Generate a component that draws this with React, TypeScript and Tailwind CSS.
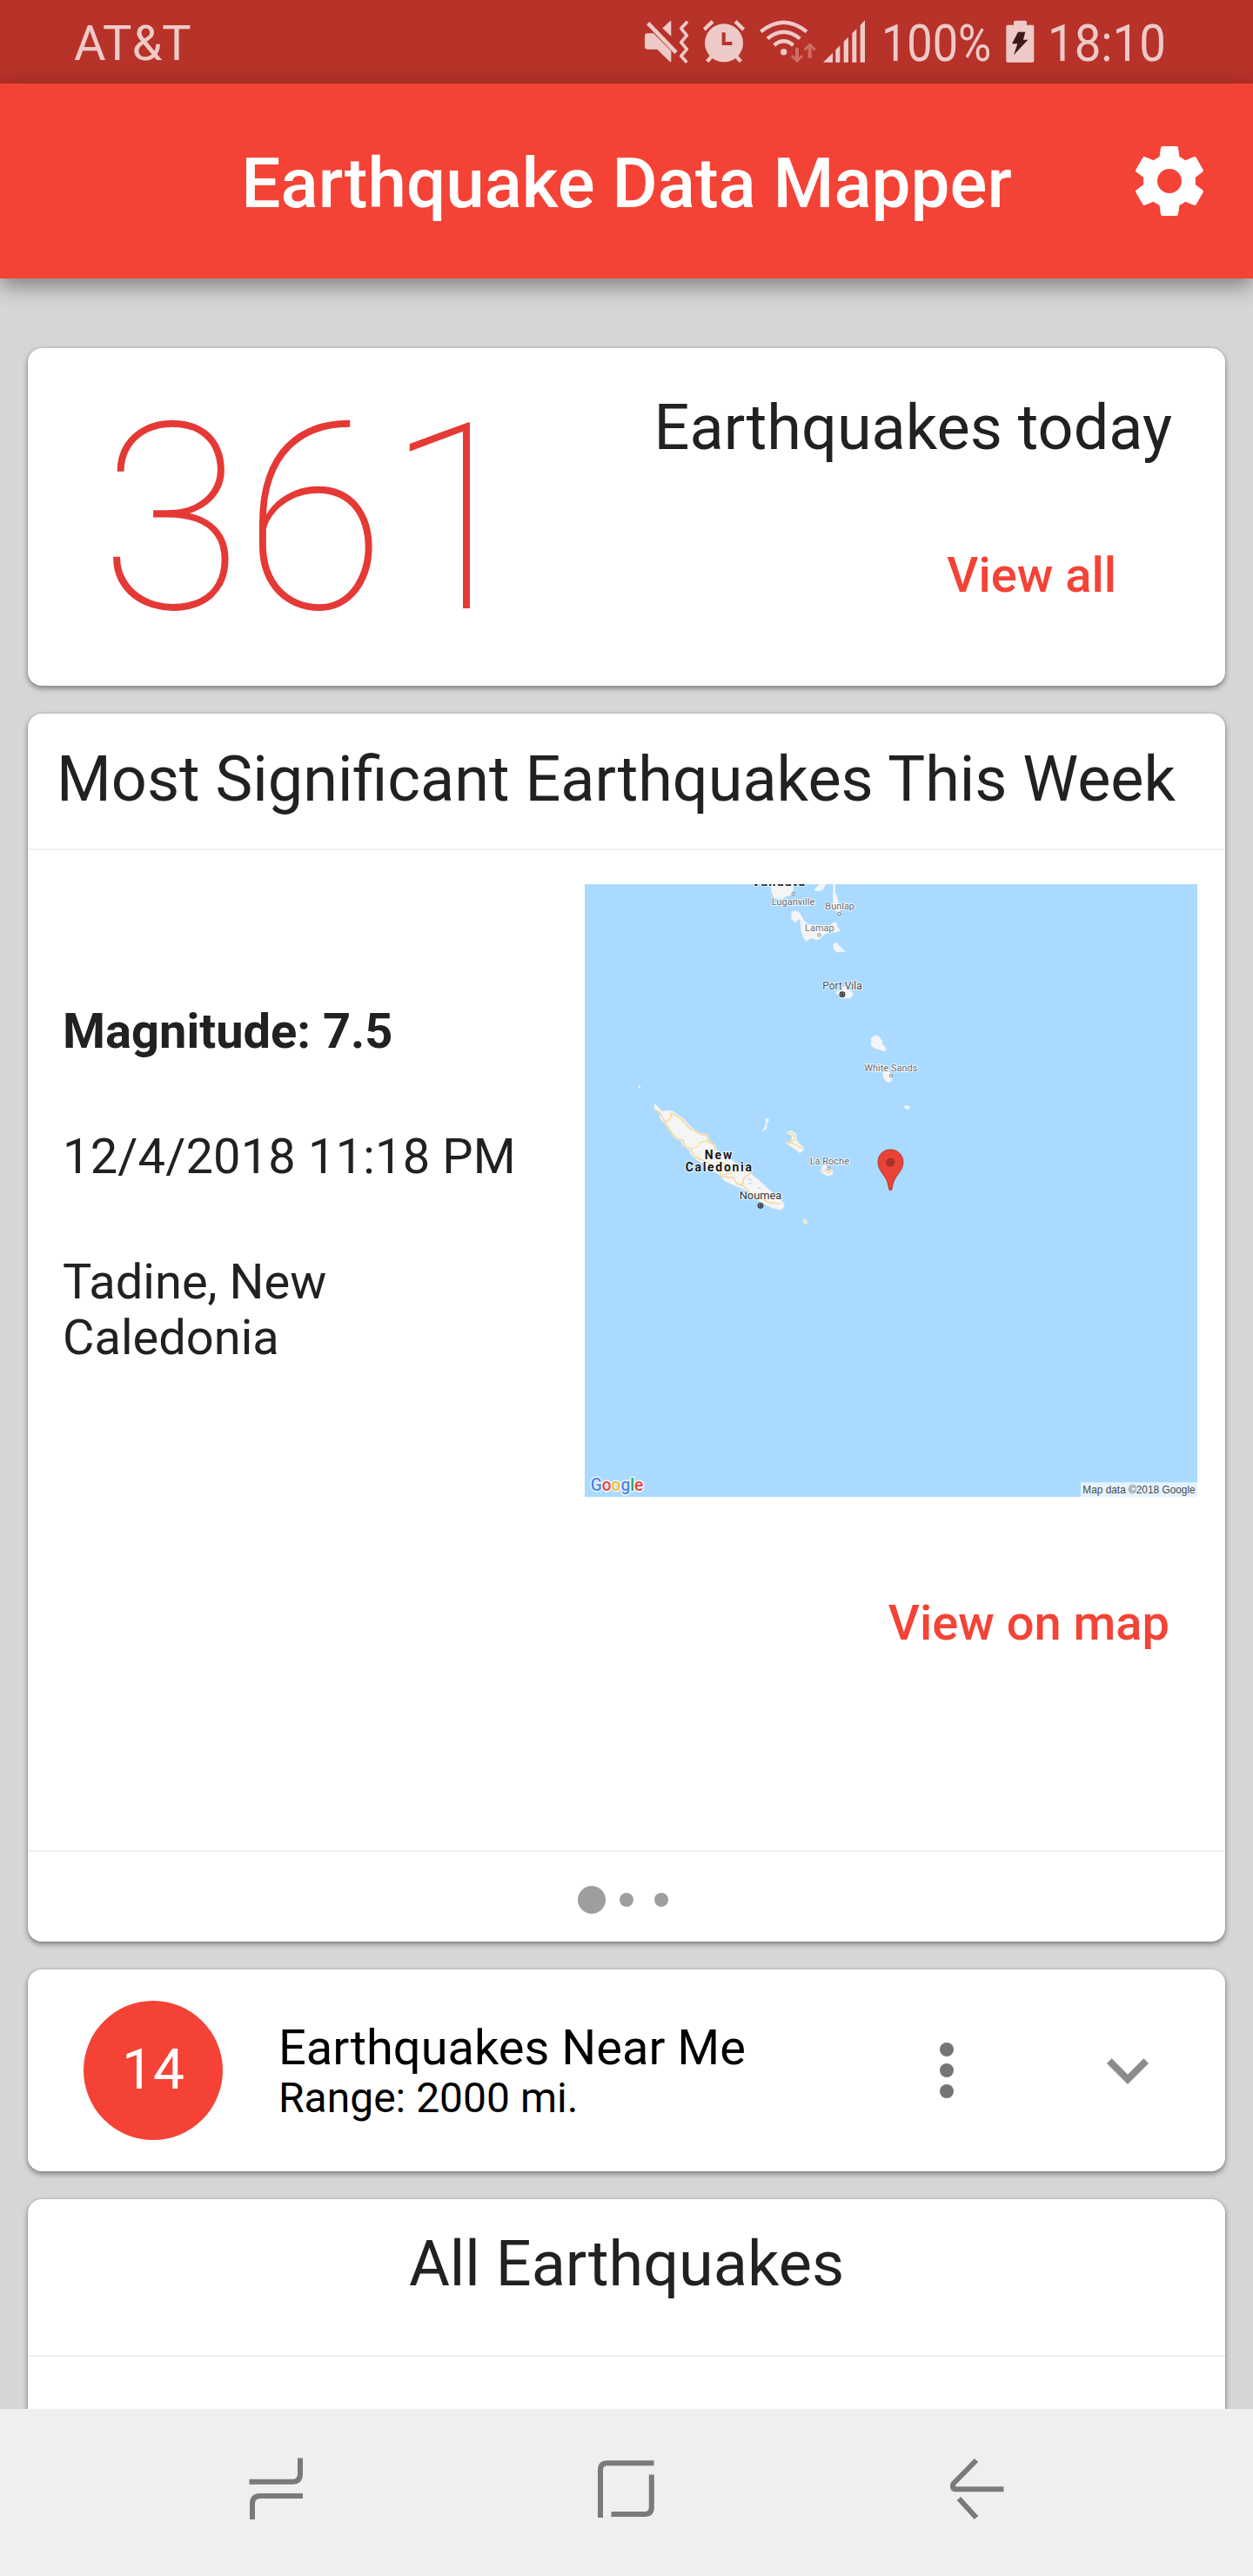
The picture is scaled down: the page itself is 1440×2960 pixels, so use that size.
import type { ReactNode } from "react";

const statusTint = "#edcac8";

function MuteIcon() {
  return (
    <svg className="h-[50px] w-[52px]" viewBox="36 40 156 150" fill={statusTint}>
      <path d="M97 68l26-24h4v52z" />
      <path d="M36 96q0-10 10-10h20l61 61v37h-4L79 141H46q-10 0-10-10z" />
      <path d="M53 41l102 106" stroke="#b73229" strokeWidth="9" fill="none" />
      <path d="M47 51l97 101" stroke={statusTint} strokeWidth="14" fill="none" />
      <path d="M183 45L161 69L181 93L161 117L181 141L161 164L181 186" stroke={statusTint} strokeWidth="11" strokeLinejoin="round" fill="none" />
    </svg>
  );
}

function AlarmIcon() {
  return (
    <svg className="ml-[15px] h-[50px] w-[48px]" viewBox="236 40 144 150" fill={statusTint}>
      <circle cx="308" cy="119" r="66" />
      <path d="M240 73l29-28M376 73l-29-28" stroke={statusTint} strokeWidth="13" />
      <path d="M250 183l16-18M366 183l-16-18" stroke={statusTint} strokeWidth="13" />
      <path d="M307 83v38h29" stroke="#b73229" strokeWidth="12" fill="none" />
    </svg>
  );
}

function WifiIcon() {
  return (
    <svg className="ml-[17px] h-[50px] w-[66px]" viewBox="432 40 198 150" fill="none" stroke={statusTint} strokeWidth="13">
      <path d="M436 80q79-64 158 0" />
      <path d="M459 104q56-46 112 0" />
      <path d="M482 127q33-28 66 0" />
      <circle cx="515" cy="150" r="11" fill={statusTint} stroke="none" />
      <path d="M561 135v40M605 171v-40" stroke="#cf6d67" strokeWidth="12" />
      <path d="M543 163l18 18 18-18M587 143l18-18 18 18" stroke="#cf6d67" strokeWidth="9" />
    </svg>
  );
}

function SignalIcon() {
  return (
    <svg className="ml-[7px] h-[50px] w-[49px]" viewBox="650 40 147 150" fill={statusTint}>
      <path d="M650 186l33-33v33zM693 143l15-15v58h-15zM721 114l16-15v87h-16zM750 85l15-14v115h-15zM778 57l16-16v145h-16z" />
    </svg>
  );
}

function BatteryIcon() {
  return (
    <svg className="h-[50px] w-[33px]" viewBox="1280 40 99 150" fill={statusTint}>
      <path d="M1307 57v-10q0-5 5-5h35q5 0 5 5v10h20q5 0 5 5v119q0 5-5 5h-86q-5 0-5-5V62q0-5 5-5z" />
      <path d="M1322 81h25l-7 27h16l-49 53 13-39h-19z" fill="#3f1a1a" />
    </svg>
  );
}

function StatusBar() {
  return (
    <div className="flex h-[96px] items-center justify-between bg-[#b73229] pl-[85px] pr-[98px] text-[#edcac8]">
      <span className="pt-[4px] text-[56px] leading-[60px]">AT&amp;T</span>
      <div className="flex items-center">
        <MuteIcon />
        <AlarmIcon />
        <WifiIcon />
        <SignalIcon />
        <span className="ml-[18px] w-[143px] pt-[4px] text-[60px] leading-[60px]">
          <span className="inline-block origin-left scale-x-[0.87]">100%</span>
        </span>
        <BatteryIcon />
        <span className="ml-[15px] w-[138px] pt-[4px] text-[60px] leading-[60px]">
          <span className="inline-block origin-left scale-x-[0.91]">18:10</span>
        </span>
      </div>
    </div>
  );
}

function AppBar() {
  return (
    <header className="relative z-10 grid h-[224px] grid-cols-[144px_1fr_144px] items-center bg-[#f44336] text-white shadow-[0_8px_24px_rgba(0,0,0,0.42)]">
      <span />
      <h1 className="pt-[5px] text-center text-[80px] font-medium leading-[96px]">Earthquake Data Mapper</h1>
      <svg className="size-[96px]" viewBox="0 0 24 24" fill="currentColor">
        <path d="M19.43 12.98c.04-.32.07-.64.07-.98s-.03-.66-.07-.98l2.11-1.65c.19-.15.24-.42.12-.64l-2-3.46c-.12-.22-.39-.3-.61-.22l-2.49 1c-.52-.4-1.08-.73-1.69-.98l-.38-2.65C14.46 2.18 14.25 2 14 2h-4c-.25 0-.46.18-.49.42l-.38 2.65c-.61.25-1.17.59-1.69.98l-2.49-1c-.23-.09-.49 0-.61.22l-2 3.46c-.13.22-.07.49.12.64l2.11 1.65c-.04.32-.07.65-.07.98s.03.66.07.98l-2.11 1.65c-.19.15-.24.42-.12.64l2 3.46c.12.22.39.3.61.22l2.49-1c.52.4 1.08.73 1.69.98l.38 2.65c.03.24.24.42.49.42h4c.25 0 .46-.18.49-.42l.38-2.65c.61-.25 1.17-.59 1.69-.98l2.49 1c.23.09.49 0 .61-.22l2-3.46c.12-.22.07-.49-.12-.64l-2.11-1.65zM12 15.5c-1.93 0-3.5-1.57-3.5-3.5s1.57-3.5 3.5-3.5 3.5 1.57 3.5 3.5-1.57 3.5-3.5 3.5z" />
      </svg>
    </header>
  );
}

function Card({ className, children }: { className: string; children: ReactNode }) {
  return (
    <section className={`shrink-0 rounded-[16px] bg-white shadow-[0_3px_6px_rgba(0,0,0,0.4),0_0_3px_rgba(0,0,0,0.15)] ${className}`}>
      {children}
    </section>
  );
}

type Place = { name: string; x: number; y: number; w: number; size: number; color: string; dot: [number, number]; capital?: boolean };

const places: Place[] = [
  { name: "Luganville", x: 650, y: 119, w: 149, size: 33, color: "#6b6f74", dot: [725, 81] },
  { name: "Bunlap", x: 835, y: 136, w: 101, size: 33, color: "#6b6f74", dot: [883, 150] },
  { name: "Lamap", x: 765, y: 209, w: 101, size: 33, color: "#6b6f74", dot: [814, 223] },
  { name: "Port Vila", x: 826, y: 410, w: 136, size: 36, color: "#4a4d50", dot: [894, 428], capital: true },
  { name: "White Sands", x: 970, y: 693, w: 183, size: 33, color: "#6b6f74", dot: [1062, 708] },
  { name: "La Roche", x: 782, y: 1013, w: 136, size: 33, color: "#6b6f74", dot: [847, 1028] },
  { name: "Noumea", x: 539, y: 1133, w: 146, size: 38, color: "#333639", dot: [612, 1156], capital: true },
];

function IslandMap() {
  return (
    <svg className="size-[704px] shrink-0" viewBox="6 48 2112 2112">
      <rect x="6" y="48" width="2112" height="2112" fill="#aadaff" />
      <g fill="#f5f5f5" stroke="#f5f5f5" strokeWidth="2" strokeLinejoin="round">
        <path d="M647 48H725L723 82L701 90L685 98L660 95L650 73Z" />
        <path d="M797 68L813 51L837 47L828 65L812 72Z" />
        <path d="M864 47H869V74L876 94L885 134L880 150L866 130L862 96Z" />
        <path d="M720 143Q732 138 746 145L760 171L776 187L798 190L850 191L866 180L874 182L876 197L888 208L872 213L850 212L830 222L812 240L785 234L769 245L757 225L752 205L750 172L745 168L733 180L719 168Z" />
        <path d="M864 254L872 248L884 262L904 280L874 282L864 270Z" />
        <path d="M870 422L886 414L900 400L922 414L932 428L920 441L888 441L882 428Z" />
        <path d="M994 580Q1004 566 1018 572L1032 588L1030 598L1044 612L1042 624L1008 614L994 604Z" />
        <path d="M1034 696L1054 693L1068 704L1062 729L1050 731L1036 716Z" />
        <path d="M1106 816L1116 810L1128 818L1120 824Z" />
        <path d="M190 740L196 744L198 752L193 750Z" />
        <path d="M247 804L272 832L290 828L308 830L345 855L375 888L400 905L430 912L436 934L455 945L458 962L500 990L550 1025L580 1048L610 1072L640 1100L675 1128L694 1152L690 1164L682 1170L655 1165L620 1148L590 1125L560 1102L525 1087L490 1072L470 1050L440 1030L400 1002L375 985L368 965L345 950L340 935L315 922L300 899L282 872L264 852L268 840L247 826Z" />
        <path d="M632 854L642 860L634 870L632 890L620 900L630 878Z" />
        <path d="M700 906L718 898L734 908L736 932L761 958L758 966L748 974L724 956L698 938L718 934L722 914Z" />
        <path d="M824 1020L838 1018L858 1032L861 1048L844 1054L822 1042Z" />
        <path d="M759 1202L767 1204L773 1214L767 1222L760 1214Z" />
      </g>
      <g fill="none" stroke="#f5d48a" strokeWidth="4" strokeLinejoin="round">
        <path d="M247 824L265 836L285 870L310 912L325 925L345 930L350 952L372 960L382 985L420 1003L470 1030L476 1056L520 1060L530 1080L552 1088L575 1110L610 1130L640 1145L680 1150" />
        <path d="M304 836L340 858L368 890L410 912L430 915L430 934L452 946L456 965" />
        <path d="M285 868L302 855L304 836" />
        <path d="M374 960L400 950L405 938L430 932L450 940M478 1050L510 1045L508 1030L490 1012L460 1004" strokeWidth="3" />
        <path d="M548 1086L555 1062L576 1045" />
        <path d="M702 908L720 905L730 915L728 932L704 938L728 944L758 960M824 1040L836 1034L846 1044L858 1036M762 1204L766 1220" strokeWidth="3.500" />
      </g>
      <path d="M568 1062L582 1068M572 1080L580 1078M604 1092L612 1098M470 1066L484 1074" stroke="#aadaff" strokeWidth="4" />

      {places.map((p) => (
        <g key={p.name}>
          <text x={p.x} y={p.y} textLength={p.w} lengthAdjust="spacingAndGlyphs" fontSize={p.size} fill={p.color} stroke="#ffffff" strokeOpacity="0.8" strokeWidth="6" strokeLinejoin="round" paintOrder="stroke">
            {p.name}
          </text>
          <circle cx={p.dot[0]} cy={p.dot[1]} r={p.capital ? 8.5 : 5} fill={p.capital ? "#8a8d90" : "#ffffff"} stroke={p.capital ? "#303236" : "#777b80"} strokeWidth={p.capital ? 3.5 : 3} />
          {p.capital && <circle cx={p.dot[0]} cy={p.dot[1]} r="3.5" fill="#202124" />}
        </g>
      ))}
      <g fill="#15171a" fontWeight="700" fontSize="42" stroke="#ffffff" strokeOpacity="0.8" strokeWidth="6" strokeLinejoin="round" paintOrder="stroke">
        <text x="583" y="53" textLength="182">Vanuatu</text>
        <text x="419" y="997" textLength="95">New</text>
        <text x="353" y="1037" textLength="229">Caledonia</text>
      </g>

      <path d="M1060 963c-25 0-43 19-43 43 0 35 34 48 37 88 0 6 2 9 6 9s6-3 6-9c3-40 38-53 38-88 0-24-19-43-44-43z" fill="#ea4335" stroke="#b5382d" strokeWidth="3" />
      <circle cx="1060" cy="1007" r="15.5" fill="#a8332a" />

      <text x="26" y="2138" textLength="182" lengthAdjust="spacingAndGlyphs" fontSize="61" fontWeight="500" stroke="#ffffff" strokeOpacity="0.8" strokeWidth="9" strokeLinejoin="round" paintOrder="stroke">
        <tspan fill="#4a86e8">G</tspan>
        <tspan fill="#e5443a">o</tspan>
        <tspan fill="#f2bd2c">o</tspan>
        <tspan fill="#4a86e8">g</tspan>
        <tspan fill="#34a353">l</tspan>
        <tspan fill="#e5443a">e</tspan>
      </text>
      <rect x="1716" y="2110" width="402" height="50" fill="#e5f3ff" />
      <text x="1723" y="2148" textLength="388" lengthAdjust="spacingAndGlyphs" fontSize="37" fill="#4a4d50" fontFamily="Liberation Sans, sans-serif">
        Map data ©2018 Google
      </text>
    </svg>
  );
}

function TodayCard() {
  return (
    <Card className="flex h-[388px] justify-between pl-[83px] pt-[47px]">
      <div className="text-[300px] font-[120] leading-[300px] text-[#e53935]">361</div>
      <div className="flex flex-col items-end pt-[3px]">
        <h2 className="pr-[61px] text-[72px] leading-[84px]">Earthquakes today</h2>
        <button className="mr-[125px] mt-[95px] text-[56px] font-medium leading-[64px] text-[#f44336]">View all</button>
      </div>
    </Card>
  );
}

function SignificantCard() {
  return (
    <Card className="flex h-[1411px] flex-col">
      <h2 className="h-[157px] whitespace-nowrap border-b-2 border-[#eeeeee] pl-[33px] pt-[34px] text-[72px] leading-[84px]">
        Most Significant Earthquakes This Week
      </h2>
      <div className="flex justify-between pl-[40px] pr-[32px] pt-[39px]">
        <div className="flex w-[540px] flex-col gap-[80px] pt-[137px] text-[56px] leading-[64px]">
          <p className="font-bold">Magnitude: 7.5</p>
          <p className="tracking-[0.16px]">12/4/2018 11:18 PM</p>
          <p>
            Tadine, New
            <br />
            Caledonia
          </p>
        </div>
        <IslandMap />
      </div>
      <div className="flex justify-end pr-[64px] pt-[113px]">
        <button className="text-[56px] font-medium leading-[64px] text-[#f44336]">View on map</button>
      </div>
      <div className="mt-auto flex h-[105px] items-center justify-center border-t-2 border-[#eeeeee] pr-[8px] pt-[6px]">
        <span className="size-[32px] rounded-full bg-[#9e9e9e]" />
        <span className="ml-[16px] size-[16px] rounded-full bg-[#9e9e9e]" />
        <span className="ml-[24px] size-[16px] rounded-full bg-[#9e9e9e]" />
      </div>
    </Card>
  );
}

function NearMeCard() {
  return (
    <Card className="flex h-[232px] items-center pl-[64px] pr-[64px] text-black">
      <div className="flex size-[160px] items-center justify-center rounded-full bg-[#f44336] text-[64px] text-white">14</div>
      <div className="ml-[64px] flex-1">
        <p className="text-[56px] leading-[64px]">Earthquakes Near Me</p>
        <p className="text-[48px] leading-[52px]">Range: 2000 mi.</p>
      </div>
      <svg className="size-[96px]" viewBox="0 0 24 24" fill="#757575">
        <circle cx="12" cy="6" r="2" />
        <circle cx="12" cy="12" r="2" />
        <circle cx="12" cy="18" r="2" />
      </svg>
      <svg className="ml-[112px] size-[96px]" viewBox="0 0 24 24" fill="#8c8c8c">
        <path d="M16.59 8.59L12 13.17 7.41 8.59 6 10l6 6 6-6z" />
      </svg>
    </Card>
  );
}

function NavBar() {
  return (
    <nav className="flex h-[192px] items-center justify-between bg-[#efefef] px-[270px] text-[#7a7a7a]">
      <svg className="h-[96px] w-[96px]" viewBox="270 2816 96 96" fill="none" stroke="currentColor" strokeWidth="6">
        <path d="M286.5 2851.8H336q9 0 9-9V2824.5M348 2868H299q-9 0-9 9V2895" />
      </svg>
      <svg className="h-[96px] w-[96px]" viewBox="672 2816 96 96" fill="none" stroke="currentColor" strokeWidth="6">
        <path d="M751.5 2830.3H698q-8 0-8 8V2893M748.8 2843.5V2881q0 8-8 8H702.5" />
      </svg>
      <svg className="h-[96px] w-[96px]" viewBox="1074 2816 96 96" fill="none" stroke="currentColor" strokeWidth="6">
        <path d="M1122 2827L1095.5 2854q-2 6.300 3 6.300H1153.500M1102 2871L1122 2893" strokeLinejoin="round" />
      </svg>
    </nav>
  );
}

export default function App() {
  return (
    <div className="flex h-[2960px] w-[1440px] flex-col overflow-hidden bg-[#d6d6d6] font-['Roboto',sans-serif] text-[#212121]">
      <StatusBar />
      <AppBar />
      <main className="flex min-h-0 flex-1 flex-col gap-[32px] overflow-hidden px-[32px] pt-[80px]">
        <TodayCard />
        <SignificantCard />
        <NearMeCard />
        <Card className="h-[400px]">
          <h2 className="h-[181px] border-b-2 border-[#eeeeee] pt-[33px] text-center text-[72px] leading-[84px]">All Earthquakes</h2>
        </Card>
      </main>
      <NavBar />
    </div>
  );
}
